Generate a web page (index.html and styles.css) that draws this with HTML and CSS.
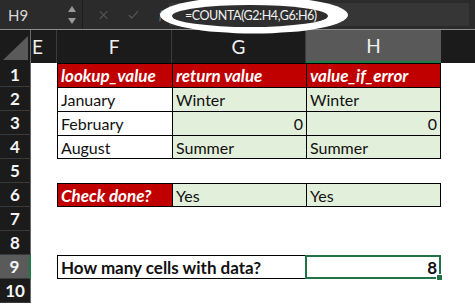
FILE: index.html
```html
<!DOCTYPE html>
<html>
<head>
  <meta charset="utf-8">
  <title>COUNTA example</title>
  <link rel="stylesheet" href="styles.css">
</head>
<body>
  <div class="fbar">
    <div class="namebox">
      <span class="ref">H9</span>
      <span class="spin">
        <svg width="8" height="20" viewBox="0 0 8 20"><path d="M4 1 L8 7 L0 7 Z M0 13 L8 13 L4 19 Z" fill="#9a9a9a"/></svg>
      </span>
    </div>
    <div class="tools">
      <svg class="ico" width="12" height="12" viewBox="0 0 12 12"><path d="M1 1 L11 11 M11 1 L1 11" stroke="#555" stroke-width="1.6"/></svg>
      <svg class="ico" width="14" height="12" viewBox="0 0 14 12"><path d="M1 6 L5 10 L13 1" stroke="#555" stroke-width="1.6" fill="none"/></svg>
      <span class="fx">fx</span>
    </div>
    <div class="field"><span class="formula">=COUNTA(G2:H4,G6:H6)</span></div>
  </div>

  <svg class="ring" width="475" height="40" viewBox="0 0 475 40">
    <ellipse cx="254" cy="15" rx="94" ry="18.5" fill="#fff"/>
    <ellipse cx="250" cy="16" rx="78" ry="11" fill="#2e2e2e"/>
  </svg>

  <div class="sheet">
    <div class="corner"><svg width="31" height="33" viewBox="0 0 31 33"><path d="M3 30 L28 6 L28 30 Z" fill="#5a5a5a"/></svg></div>
    <div class="colhead e"><span>E</span></div>
    <div class="colhead">F</div>
    <div class="colhead">G</div>
    <div class="colhead sel">H</div>
    <div class="colhead rest"></div>

    <div class="rowhead">1</div><div></div>
    <div class="c red t l">lookup_value</div>
    <div class="c red t">return value</div>
    <div class="c red t r">value_if_error</div><div></div>

    <div class="rowhead">2</div><div></div>
    <div class="c l">January</div>
    <div class="c green">Winter</div>
    <div class="c green r">Winter</div><div></div>

    <div class="rowhead">3</div><div></div>
    <div class="c l">February</div>
    <div class="c green num">0</div>
    <div class="c green num r">0</div><div></div>

    <div class="rowhead">4</div><div></div>
    <div class="c l bt">August</div>
    <div class="c green bt">Summer</div>
    <div class="c green r bt">Summer</div><div></div>

    <div class="rowhead">5</div><div class="blank"></div>

    <div class="rowhead">6</div><div></div>
    <div class="c red t l bt">Check done?</div>
    <div class="c green bt">Yes</div>
    <div class="c green r bt">Yes</div><div></div>

    <div class="rowhead">7</div><div class="blank"></div>
    <div class="rowhead">8</div><div class="blank"></div>

    <div class="rowhead sel">9</div><div></div>
    <div class="c box strong">How many cells with data?</div>
    <div class="c active num strong">8<span class="handle"></span></div><div></div>

    <div class="rowhead">10</div><div class="blank"></div>
  </div>
</body>
</html>
```

FILE: styles.css
```css
body {
  margin: 0;
  background: #fff;
  font-family: Lato, "Noto Sans", sans-serif;
  width: 475px;
  height: 304px;
  overflow: hidden;
  position: relative;
}

/* formula bar */
.fbar {
  height: 29px;
  background: #2b2b2b;
  border-bottom: 1px solid #8e8e8e;
  display: flex;
  align-items: center;
}
.namebox {
  width: 83px;
  height: 29px;
  box-sizing: border-box;
  border-right: 1px solid #1e1e1e;
  display: flex;
  align-items: center;
  justify-content: space-between;
  padding: 0 6px 0 8px;
}
.ref { color: #d8d8d8; font-size: 15px; }
.spin svg { display: block; }
.tools {
  width: 86px;
  display: flex;
  align-items: center;
  gap: 20px;
  padding-left: 16px;
  box-sizing: border-box;
}
.fx { color: #777; font-size: 13px; font-style: italic; }
.field {
  flex: 1;
  height: 23px;
  margin-right: 6px;
  background: #363636;
  display: flex;
  align-items: center;
}
.formula {
  position: relative;
  z-index: 2;
  color: #f2f2f2;
  font-size: 12.5px;
  letter-spacing: -0.45px;
  margin-left: 16px;
  margin-top: 2px;
}
.ring {
  position: absolute;
  left: 0;
  top: 0;
  z-index: 1;
}

/* grid */
.sheet {
  display: grid;
  grid-template-columns: 31px 26px 115px 134px 135px 1fr;
  grid-template-rows: 33px repeat(10, 24px);
}
.corner { background: #1b1b1b; border-right: 1px solid #6a6a6a; box-sizing: border-box; }
.corner svg { display: block; }
.colhead {
  background: #1b1b1b;
  color: #f0f0f0;
  font-size: 19px;
  display: flex;
  align-items: center;
  justify-content: center;
  border-right: 1px solid #3c3c3c;
  box-sizing: border-box;
}
.colhead.e { justify-content: flex-start; padding-left: 1px; }
.colhead.sel { background: #595959; border-bottom: 2px solid #1f7a45; border-right: 0; }
.colhead.rest { border-right: 0; }
.rowhead {
  background: #1b1b1b;
  color: #f4f4f4;
  font-weight: bold;
  font-size: 17px;
  display: flex;
  align-items: center;
  justify-content: center;
  border-right: 1px solid #6a6a6a;
  border-bottom: 1px solid #3a3a3a;
  box-sizing: border-box;
}
.rowhead.sel { background: #5a5a5a; border-right: 2px solid #1f7a45; }
.blank { grid-column: 2 / -1; }

.c {
  font-size: 16px;
  color: #111;
  display: flex;
  align-items: center;
  padding: 0 3px;
  box-sizing: border-box;
  border-left: 1px solid #000;
  border-top: 1px solid #000;
  white-space: nowrap;
  overflow: hidden;
}
.c.r { border-right: 1px solid #000; }
.c.bt { border-bottom: 1px solid #000; }
.red { background: #c00000; color: #fff; font-weight: bold; font-style: italic; font-size: 17px; }
.green { background: #e2efda; }
.num { justify-content: flex-end; }
.strong { font-weight: bold; font-size: 17px; }
.box { grid-column: span 2; border: 1px solid #000; }
.active {
  position: relative;
  overflow: visible;
  border: 2px solid #217346;
  margin-left: -1px;
  padding-right: 2px;
}
.handle {
  position: absolute;
  right: -4px;
  bottom: -4px;
  width: 5px;
  height: 5px;
  background: #217346;
  border: 1px solid #fff;
}
```
